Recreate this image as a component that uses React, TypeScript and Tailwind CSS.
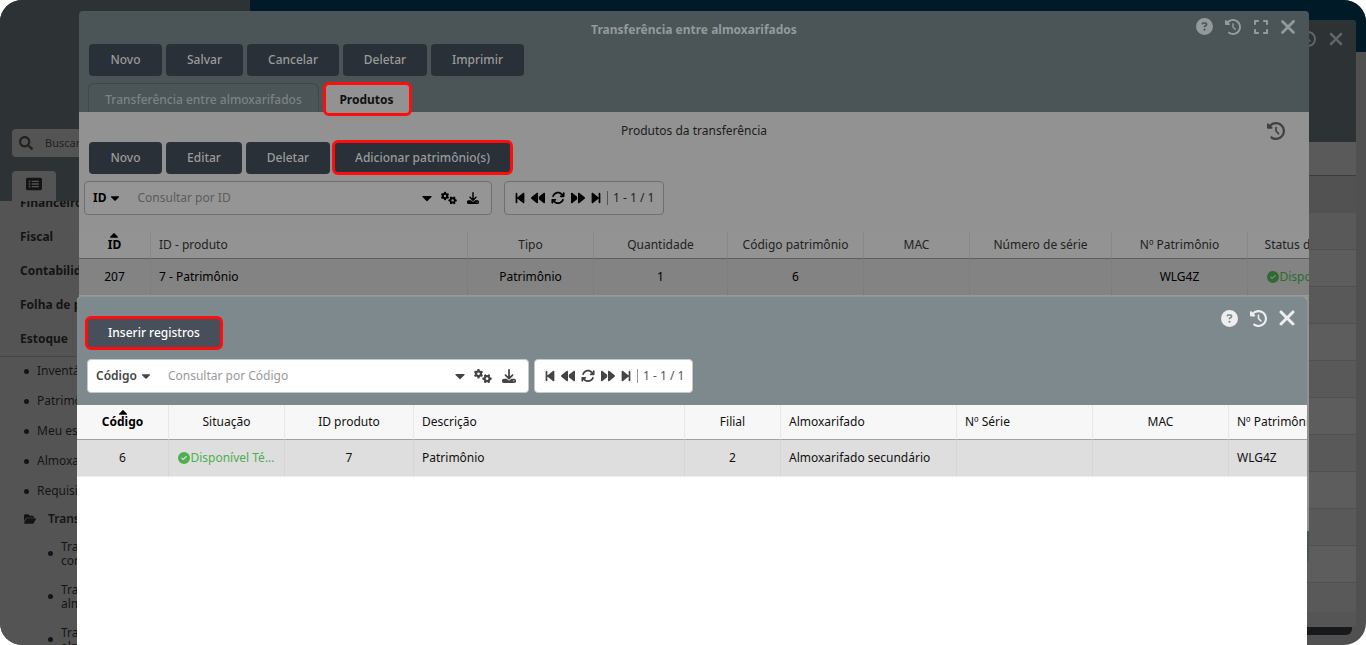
import React from "react";
import { FaCaretDown, FaCaretUp, FaSearch } from "react-icons/fa";
import {
  FaArrowsRotate,
  FaBackward,
  FaBackwardStep,
  FaCircleCheck,
  FaCircleQuestion,
  FaClockRotateLeft,
  FaDownload,
  FaExpand,
  FaFolderOpen,
  FaForward,
  FaForwardStep,
  FaGears,
  FaRectangleList,
  FaXmark,
} from "react-icons/fa6";

type Column = {
  title: string;
  value: string;
  width: string;
  align?: "left";
  sorted?: boolean;
  status?: boolean;
};

const modules = ["Financeiro", "Fiscal", "Contabilidade", "Folha de pagamento", "Estoque"];

const stockItems = [
  "Inventário",
  "Patrimônio",
  "Meu estoque",
  "Almoxarifado",
  "Requisição de material",
];

const transferItems = [
  ["Transferência", "comum"],
  ["Transferência entre", "almoxarifados"],
  ["Transferência de", "almoxarifado"],
];

const productColumns: Column[] = [
  { title: "ID", value: "207", width: "w-[72px]", sorted: true },
  { title: "ID - produto", value: "7 - Patrimônio", width: "w-[317px]", align: "left" },
  { title: "Tipo", value: "Patrimônio", width: "w-[126px]" },
  { title: "Quantidade", value: "1", width: "w-[134px]" },
  { title: "Código patrimônio", value: "6", width: "w-[136px]" },
  { title: "MAC", value: "", width: "w-[106px]" },
  { title: "Número de série", value: "", width: "w-[142px]" },
  { title: "Nº Patrimônio", value: "WLG4Z", width: "w-[136px]" },
  { title: "Status do produto", value: "Disponível Té...", width: "w-[136px]", status: true },
];

const assetColumns: Column[] = [
  { title: "Código", value: "6", width: "w-[92px]", sorted: true },
  { title: "Situação", value: "Disponível Té...", width: "w-[116px]", status: true },
  { title: "ID produto", value: "7", width: "w-[129px]" },
  { title: "Descrição", value: "Patrimônio", width: "w-[271px]", align: "left" },
  { title: "Filial", value: "2", width: "w-[96px]" },
  { title: "Almoxarifado", value: "Almoxarifado secundário", width: "w-[176px]", align: "left" },
  { title: "Nº Série", value: "", width: "w-[136px]", align: "left" },
  { title: "MAC", value: "", width: "w-[136px]" },
  { title: "Nº Patrimônio", value: "WLG4Z", width: "w-[136px]", align: "left" },
];

const ActionButton = ({ label, width }: { label: string; width: string }) => (
  <button className={`h-8 rounded bg-[#2a3037] font-medium text-[#9a9b9d] ${width}`}>
    {label}
  </button>
);

const SearchBar = ({ field, dimmed }: { field: string; dimmed?: boolean }) => (
  <div
    className={`flex h-[34px] items-center rounded border px-2 ${
      dimmed
        ? "w-[408px] border-[#6f6f6f] bg-[#959595] text-black"
        : "w-[442px] border-[#c8c8c8] bg-white text-[#444]"
    }`}
  >
    <button className={`flex items-center gap-0.5 ${dimmed ? "font-bold" : "font-semibold"}`}>
      {field}
      <FaCaretDown className="size-3.5" />
    </button>
    <input
      type="text"
      aria-label={`Consultar por ${field}`}
      placeholder={`Consultar por ${field}`}
      className={`ml-[15px] min-w-0 flex-1 bg-transparent outline-none ${
        dimmed ? "placeholder:text-[#5c5c5c]" : "placeholder:text-[#999]"
      }`}
    />
    <button aria-label="Opções de consulta">
      <FaCaretDown className="size-4" />
    </button>
    <button aria-label="Configurações" className={dimmed ? "ml-1.5" : "ml-1.5"}>
      <FaGears className={dimmed ? "size-4" : "size-[18px]"} />
    </button>
    <button aria-label="Exportar" className={dimmed ? "mr-1 ml-2.5" : "mr-1 ml-2.5"}>
      <FaDownload className={dimmed ? "size-3" : "size-3.5"} />
    </button>
  </div>
);

const Pager = ({ dimmed }: { dimmed?: boolean }) => (
  <div
    className={`flex h-[34px] items-center gap-1 rounded border px-2 ${
      dimmed
        ? "w-[160px] border-[#6f6f6f] bg-[#959595] text-black"
        : "w-[159px] border-[#c8c8c8] bg-white text-[#444]"
    }`}
  >
    <button aria-label="Primeira página">
      <FaBackwardStep className="size-3.5" />
    </button>
    <button aria-label="Página anterior">
      <FaBackward className="size-3.5" />
    </button>
    <button aria-label="Atualizar" className="mx-0.5">
      <FaArrowsRotate className="size-3.5" />
    </button>
    <button aria-label="Próxima página">
      <FaForward className="size-3.5" />
    </button>
    <button aria-label="Última página">
      <FaForwardStep className="size-3.5" />
    </button>
    <span
      className={`border-l pl-[5px] leading-[14px] whitespace-nowrap ${
        dimmed ? "border-[#555] text-[#222]" : "border-[#999] text-[#555]"
      }`}
    >
      1 - 1 / 1
    </span>
  </div>
);

const DataTable = ({ columns, dimmed }: { columns: Column[]; dimmed?: boolean }) => (
  <div className="overflow-hidden">
    <table className={`table-fixed border-separate border-spacing-0 ${dimmed ? "w-[1305px]" : "w-[1288px]"}`}>
      <thead>
        <tr className={dimmed ? "h-7 bg-[#939393] text-[#222]" : "h-[35px] bg-[#f7f7f7] text-[#111]"}>
          {columns.map((column) => (
            <th
              key={column.title}
              className={`border-r border-b px-2 py-0 whitespace-nowrap ${column.width} ${
                column.sorted ? "font-bold text-black" : "font-normal"
              } ${column.align === "left" ? "text-left" : "text-center"} ${
                dimmed ? "border-r-[#888] border-b-[#5b6062]" : "border-r-[#e8e8e8] border-b-[#9ba3a8]"
              }`}
            >
              <span className="relative">
                {column.title}
                {column.sorted && (
                  <FaCaretUp className="absolute -top-2 left-1/2 size-3.5 -translate-x-1/2" />
                )}
              </span>
            </th>
          ))}
        </tr>
      </thead>
      <tbody>
        <tr className={dimmed ? "h-[37px] bg-[#838383] text-black" : "h-[37px] bg-[#dedede] text-[#111]"}>
          {columns.map((column) => (
            <td
              key={column.title}
              className={`border-r border-b px-2 py-0 whitespace-nowrap ${
                column.align === "left" ? "text-left" : "text-center"
              } ${dimmed ? "border-r-[#7e7e7e] border-b-[#999]" : "border-r-[#d6d6d6] border-b-[#eee]"}`}
            >
              {column.status ? (
                <span
                  className={`flex items-center justify-center ${
                    dimmed ? "text-[#2c6b31]" : "text-[#4caf50]"
                  }`}
                >
                  <FaCircleCheck className="size-3 shrink-0" />
                  {column.value}
                </span>
              ) : (
                column.value
              )}
            </td>
          ))}
        </tr>
      </tbody>
    </table>
  </div>
);

const Sidebar = () => (
  <aside className="flex w-[250px] shrink-0 flex-col bg-[#545454] text-[#141414]">
    <div className="flex h-[201px] shrink-0 flex-col justify-end bg-[#2d3234] px-3">
      <label className="mb-3.5 flex h-7 items-center gap-3 rounded bg-[#545454] px-[7px] text-[#222]">
        <FaSearch className="size-3.5" />
        <input
          type="text"
          aria-label="Buscar"
          placeholder="Buscar"
          className="min-w-0 flex-1 text-[11px] outline-none placeholder:text-[#222]"
        />
      </label>
      <button
        aria-label="Menu"
        className="flex h-[30px] w-11 items-center justify-center rounded-t bg-[#545454] pb-1"
      >
        <FaRectangleList className="size-4" />
      </button>
    </div>
    <nav className="min-h-0 flex-1 overflow-hidden">
      <ul className="-mt-[15px] border-b border-[#474747]">
        {modules.map((name) => (
          <li key={name} className="flex h-[34px] items-center pl-5 font-bold">
            <a href="#">{name}</a>
          </li>
        ))}
      </ul>
      <ul className="-mt-px">
        {stockItems.map((name) => (
          <li key={name} className="flex h-[30px] items-center gap-2 pl-6">
            <span className="size-[5px] rounded-full bg-current" />
            <a href="#">{name}</a>
          </li>
        ))}
        <li className="flex h-[26px] items-center gap-3 pl-6 font-semibold">
          <FaFolderOpen className="size-3" />
          <a href="#">Transferência</a>
        </li>
        {transferItems.map(([first, second]) => (
          <li key={first} className="flex h-[43px] items-center gap-2 pl-12 leading-[14px]">
            <span className="size-[5px] rounded-full bg-current" />
            <a href="#">
              {first}
              <br />
              {second}
            </a>
          </li>
        ))}
      </ul>
    </nav>
  </aside>
);

// list window left open under the other two
const BackWindow = () => (
  <section className="absolute top-5 right-2.5 bottom-2.5 left-64 flex flex-col">
    <div className="flex min-h-0 flex-1 flex-col overflow-hidden rounded-t bg-[#545454]">
      <header className="flex h-[122px] shrink-0 justify-end gap-2.5 bg-[#2d3234] px-2.5 py-[9px] text-[#626567]">
        <FaClockRotateLeft className="mt-0.5 size-4" />
        <button aria-label="Fechar" className="h-fit">
          <FaXmark className="size-5" />
        </button>
      </header>
      <div className="h-[34px] shrink-0 border-b border-[#3a3d3f] bg-[#5a5a5a]" />
      <div className="h-[37px] shrink-0 bg-[#525252]" />
      <div className="min-h-0 flex-1 overflow-hidden">
        {Array.from({ length: 11 }, (_, i) => (
          <div key={i} className="h-[37px] border-b border-[#505050] odd:bg-[#595959] even:bg-[#5d5d5d]" />
        ))}
      </div>
      <div className="h-[15px] shrink-0 bg-[#555]" />
    </div>
    <div className="mr-1 h-2 shrink-0 rounded-br-md bg-[#17191a]" />
  </section>
);

const TransferWindow = () => (
  <section className="absolute top-[11px] right-[57px] bottom-[83px] left-[79px] flex flex-col overflow-hidden rounded bg-[#4b5456]">
    <header className="flex h-[101px] shrink-0 flex-col">
      <div className="grid h-[33px] shrink-0 grid-cols-[1fr_auto_1fr] items-center px-2.5 text-[#939a9c]">
        <h1 className="col-start-2 pt-1 font-bold">Transferência entre almoxarifados</h1>
        <div className="flex items-center justify-end gap-3 pb-0.5">
          <button aria-label="Ajuda">
            <FaCircleQuestion className="size-[17px]" />
          </button>
          <button aria-label="Histórico">
            <FaClockRotateLeft className="size-4" />
          </button>
          <button aria-label="Tela cheia">
            <FaExpand className="size-4" />
          </button>
          <button aria-label="Fechar" className="-ml-1">
            <FaXmark className="size-[22px]" />
          </button>
        </div>
      </div>
      <div className="flex gap-1 pl-2.5">
        <ActionButton label="Novo" width="w-[73px]" />
        <ActionButton label="Salvar" width="w-[77px]" />
        <ActionButton label="Cancelar" width="w-[92px]" />
        <ActionButton label="Deletar" width="w-[84px]" />
        <ActionButton label="Imprimir" width="w-[93px]" />
      </div>
      <div role="tablist" className="flex items-start gap-1 pt-1.5 pl-[9px]">
        <button
          role="tab"
          aria-selected={false}
          className="mt-px h-[29px] w-[231px] rounded-t-md border border-b-0 border-[#40484b] pt-[3px] font-medium text-[#7c8385]"
        >
          Transferência entre almoxarifados
        </button>
        <button
          role="tab"
          aria-selected={true}
          className="relative h-[34px] w-[89px] rounded-md border-3 border-[#ff0d0d] bg-[#929292] pt-0.5 pr-0.5 font-bold text-[#111]"
        >
          Produtos
        </button>
      </div>
    </header>
    <div className="flex flex-1 flex-col bg-[#929292]">
      <div className="grid h-7 grid-cols-[1fr_auto_1fr] items-center px-6 text-[#1c1c1c]">
        <h2 className="col-start-2 pt-2.5">Produtos da transferência</h2>
        <button aria-label="Histórico" className="justify-self-end pt-2.5 text-[#404040]">
          <FaClockRotateLeft className="size-[18px]" />
        </button>
      </div>
      <div className="flex h-[35px] items-center gap-1 pl-2.5">
        <ActionButton label="Novo" width="w-[73px]" />
        <ActionButton label="Editar" width="w-[76px]" />
        <ActionButton label="Deletar" width="w-[84px]" />
        <button className="-ml-0.5 h-[35px] w-[181px] rounded-md border-3 border-[#ff0d0d] bg-[#2a3037] font-medium text-[#9a9b9d]">
          Adicionar patrimônio(s)
        </button>
      </div>
      <div className="flex gap-3 pt-1.5 pb-4 pl-[5px]">
        <SearchBar field="ID" dimmed />
        <Pager dimmed />
      </div>
      <DataTable columns={productColumns} dimmed />
    </div>
    <footer className="h-[31px] shrink-0" />
  </section>
);

const AssetWindow = () => (
  <section className="absolute top-[297px] right-[59px] bottom-0 left-[77px] flex flex-col overflow-hidden rounded-t bg-white">
    <header className="flex flex-col gap-[9px] bg-[#7d898d] px-2 pb-3">
      <div className="flex items-start justify-between pt-[19px]">
        <button className="h-[34px] w-[138px] rounded-md border-3 border-[#ff0d0d] bg-[#464f5a] font-medium text-white">
          Inserir registros
        </button>
        <div className="-mt-2.5 flex items-center gap-3 text-[#eee]">
          <button aria-label="Ajuda">
            <FaCircleQuestion className="size-[17px]" />
          </button>
          <button aria-label="Histórico">
            <FaClockRotateLeft className="size-[17px]" />
          </button>
          <button aria-label="Fechar" className="-ml-1">
            <FaXmark className="size-6" />
          </button>
        </div>
      </div>
      <div className="flex gap-[5px] pl-0.5">
        <SearchBar field="Código" />
        <Pager />
      </div>
    </header>
    <DataTable columns={assetColumns} />
  </section>
);

const App = () => {
  return (
    <div className="h-screen bg-white">
      <div className="relative flex h-full overflow-hidden rounded-[22px] bg-[#505050] font-['Noto_Sans','Open_Sans',sans-serif] text-[12px] leading-4">
        <Sidebar />
        <main className="flex-1">
          <div className="h-[52px] bg-[#001b27]" />
        </main>
        <BackWindow />
        <TransferWindow />
        <AssetWindow />
      </div>
    </div>
  );
};

export default App;
